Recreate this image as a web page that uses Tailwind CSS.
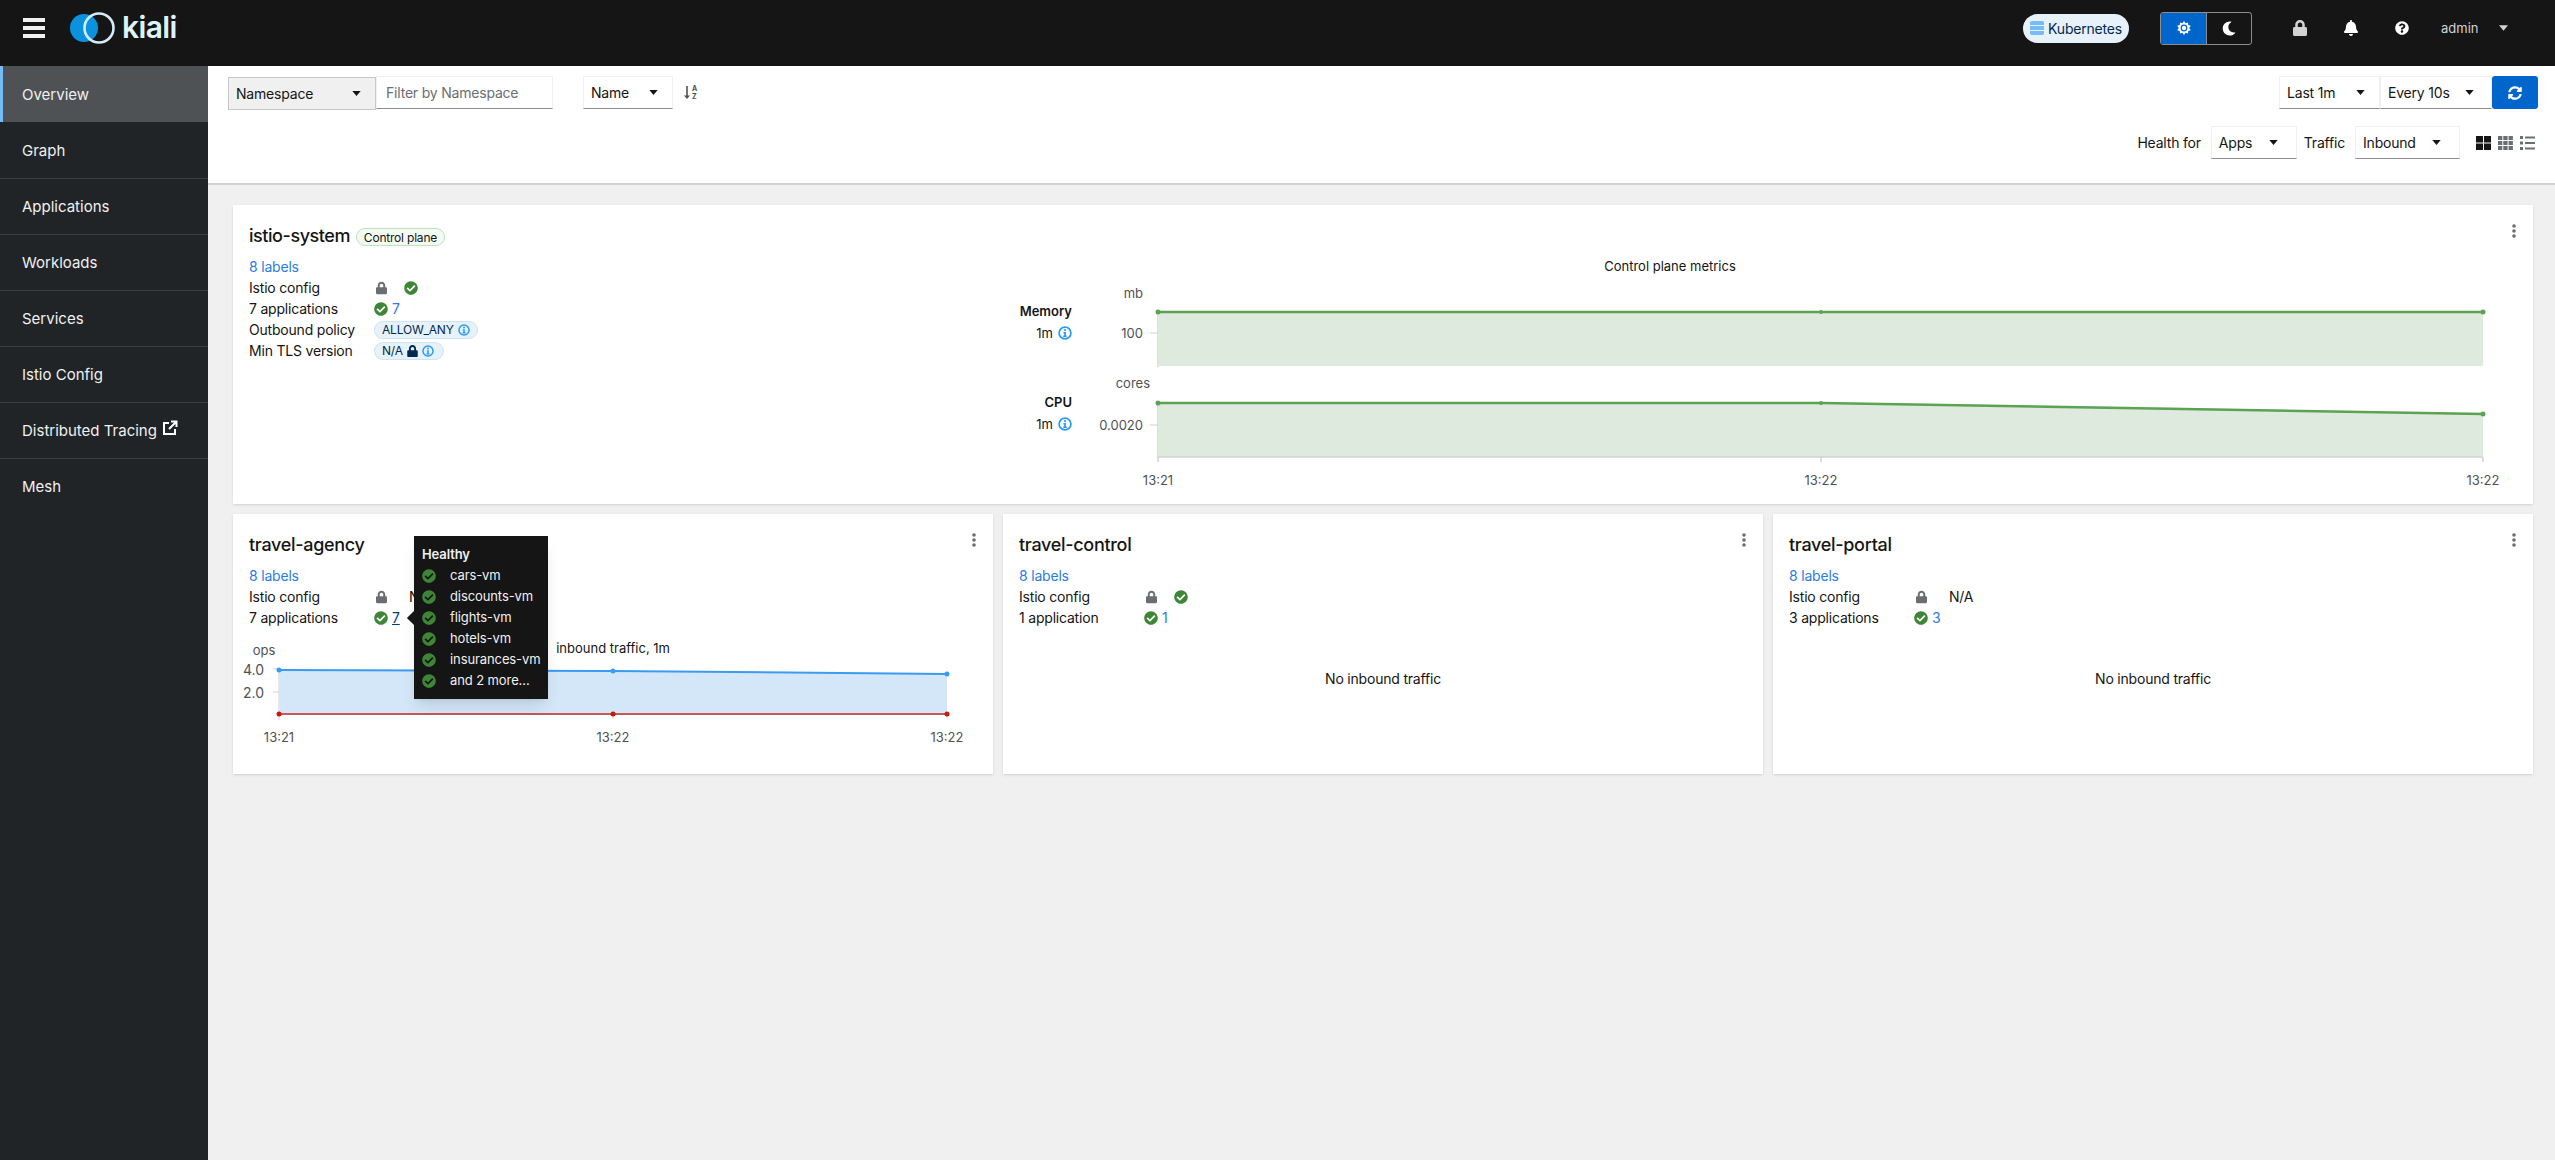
<!DOCTYPE html>
<html lang="en">
<head>
    <meta charset="UTF-8">
    <title>Kiali</title>
    <script src="https://cdn.jsdelivr.net/npm/@tailwindcss/browser@4"></script>
</head>
<body class="bg-[#f0f0f0] text-[#151515] font-[Inter,sans-serif] text-[14px] leading-[21px] tracking-[-0.2px]">
    <!-- shared icons -->
    <svg class="hidden">
        <symbol id="check" viewBox="0 0 512 512"><path d="M504 256c0 136.967-111.033 248-248 248S8 392.967 8 256 119.033 8 256 8s248 111.033 248 248zM227.314 387.314l184-184c6.248-6.248 6.248-16.379 0-22.627l-22.627-22.627c-6.248-6.249-16.379-6.249-22.628 0L216 308.118l-70.059-70.059c-6.248-6.248-16.379-6.248-22.628 0l-22.627 22.627c-6.248 6.248-6.248 16.379 0 22.627l104 104c6.249 6.25 16.379 6.25 22.628.001z"/></symbol>
        <symbol id="lock" viewBox="0 0 448 512"><path d="M400 224h-24v-72C376 68.2 307.8 0 224 0S72 68.2 72 152v72H48c-26.5 0-48 21.5-48 48v192c0 26.5 21.5 48 48 48h352c26.5 0 48-21.5 48-48V272c0-26.5-21.5-48-48-48zm-104 0H152v-72c0-39.7 32.3-72 72-72s72 32.3 72 72v72z"/></symbol>
        <symbol id="info" viewBox="0 0 512 512"><circle cx="256" cy="256" r="216" fill="none" stroke="currentColor" stroke-width="64"/><circle cx="256" cy="150" r="40"/><path d="M200 220h90v130h30v50H192v-50h34v-80h-26z"/></symbol>
        <symbol id="caret" viewBox="0 0 10 6"><path d="M0 0h10L5 6z"/></symbol>
        <symbol id="kebab" viewBox="0 0 4 14"><circle cx="2" cy="2" r="1.8"/><circle cx="2" cy="7" r="1.8"/><circle cx="2" cy="12" r="1.8"/></symbol>
    </svg>

    <div class="flex flex-col h-[1160px] overflow-hidden">
        <header class="h-[66px] shrink-0 bg-[#151515] flex items-center pb-[10px] text-white">
            <button class="ml-[23px] w-[22px] flex flex-col gap-[4px]">
                <span class="h-[4px] bg-[#f0f0f0]"></span>
                <span class="h-[4px] bg-[#f0f0f0]"></span>
                <span class="h-[4px] bg-[#f0f0f0]"></span>
            </button>
            <div class="ml-[25px] flex items-center">
                <svg width="45" height="32" viewBox="0 0 45 32">
                    <circle cx="14" cy="16" r="14" fill="#0a92de"/>
                    <circle cx="29" cy="16" r="14.500" fill="none" stroke="#d3ecf8" stroke-width="2.600"/>
                </svg>
                <span class="ml-[7px] text-[30px] font-semibold tracking-[-0.6px] text-[#def4fc] -mt-[2px]">kiali</span>
            </div>
            <div class="ml-auto flex items-center">
                <div class="h-[29px] w-[106px] rounded-full bg-[#e7f1fa] text-[#002952] flex items-center justify-center gap-[4px] text-[14px]">
                    <svg width="14" height="14" viewBox="0 0 14 14" fill="#73bcf7"><path d="M2 0h10a2 2 0 0 1 2 2v2H0V2a2 2 0 0 1 2-2z"/><rect y="5" width="14" height="4"/><path d="M0 10h14v2a2 2 0 0 1-2 2H2a2 2 0 0 1-2-2z"/></svg>
                    Kubernetes
                </div>
                <div class="ml-[31px] h-[33px] w-[92px] flex rounded-[3px] overflow-hidden border border-[#8a8d90]">
                    <div class="w-[45px] bg-[#06c] flex items-center justify-center">
                        <svg width="14" height="14" viewBox="0 0 14 14" fill="#fff"><path d="M7 0l1.500 2.200 2.500-.8.200 2.600 2.600.7L12.200 7l1.600 2.300-2.600.7-.2 2.600-2.500-.8L7 14l-1.500-2.200-2.500.8-.2-2.600L.2 9.300 1.800 7 .2 4.700l2.600-.7.200-2.600 2.500.8z"/><circle cx="7" cy="7" r="3.400" fill="#06c"/><circle cx="7" cy="7" r="2.200"/></svg>
                    </div>
                    <div class="flex-1 flex items-center justify-center border-l border-[#8a8d90]">
                        <svg width="14" height="15" viewBox="0 0 512 512" fill="#fff"><path d="M283.211 512c78.962 0 151.079-35.925 198.857-94.792 7.068-8.708-.639-21.43-11.562-19.35-124.203 23.654-238.262-71.576-238.262-196.954 0-72.222 38.662-138.635 101.498-174.394 9.686-5.512 7.25-20.197-3.756-22.23A258.156 258.156 0 0 0 283.211 0c-141.309 0-256 114.511-256 256 0 141.309 114.511 256 256 256z"/></svg>
                    </div>
                </div>
                <svg class="ml-[41px] fill-[#d2d2d2]" width="14" height="16"><use href="#lock"/></svg>
                <svg class="ml-[37px]" width="14" height="16" viewBox="0 0 448 512" fill="#fff"><path d="M224 512c35.32 0 63.97-28.65 63.97-64H160.03c0 35.35 28.65 64 63.97 64zm215.39-149.71c-19.32-20.76-55.47-51.99-55.47-154.29 0-77.7-54.48-139.9-127.94-155.16V32c0-17.67-14.32-32-31.98-32s-31.98 14.33-31.98 32v20.84C118.56 68.1 64.08 130.3 64.08 208c0 102.3-36.15 133.53-55.47 154.29-6 6.45-8.66 14.16-8.61 21.71.11 16.4 12.98 32 32.1 32h383.8c19.12 0 32-15.6 32.1-32 .05-7.55-2.61-15.27-8.61-21.71z"/></svg>
                <svg class="ml-[37px]" width="14" height="14" viewBox="0 0 512 512" fill="#fff"><path d="M504 256c0 136.997-111.043 248-248 248S8 392.997 8 256C8 119.083 119.043 8 256 8s248 111.083 248 248zM262.655 90c-54.497 0-89.255 22.957-116.549 63.758-3.536 5.286-2.353 12.415 2.715 16.258l34.699 26.31c5.205 3.947 12.621 3.008 16.665-2.122 17.864-22.658 30.113-35.797 57.303-35.797 20.429 0 45.698 13.148 45.698 32.958 0 14.976-12.363 22.667-32.534 33.976C247.128 238.528 216 254.941 216 296v4c0 6.627 5.373 12 12 12h56c6.627 0 12-5.373 12-12v-1.333c0-28.462 83.186-29.647 83.186-106.667 0-58.002-60.165-102-116.531-102zM256 338c-25.365 0-46 20.635-46 46 0 25.364 20.635 46 46 46s46-20.636 46-46c0-25.365-20.635-46-46-46z"/></svg>
                <span class="ml-[32px] w-[40px] text-[#d2d2d2] text-[13px] tracking-normal">admin</span>
                <svg class="ml-[18px] mr-[47px] fill-[#d2d2d2]" width="9" height="6"><use href="#caret"/></svg>
            </div>
        </header>

        <div class="flex flex-1 min-h-0">
            <nav class="w-[208px] shrink-0 bg-[#212427] text-[#f0f0f0] text-[15px] tracking-normal">
                <a class="h-[56px] flex items-center pl-[19px] bg-[#4f5255] border-l-[3px] border-[#73bcf7]">Overview</a>
                <a class="h-[56px] flex items-center pl-[22px]">Graph</a>
                <a class="h-[56px] flex items-center pl-[22px] border-t border-[#3c3f42]">Applications</a>
                <a class="h-[56px] flex items-center pl-[22px] border-t border-[#3c3f42]">Workloads</a>
                <a class="h-[56px] flex items-center pl-[22px] border-t border-[#3c3f42]">Services</a>
                <a class="h-[56px] flex items-center pl-[22px] border-t border-[#3c3f42]">Istio Config</a>
                <a class="h-[56px] flex items-center pl-[22px] border-t border-[#3c3f42]">Distributed Tracing
                    <svg class="ml-[5px] -mt-[6px]" width="16" height="16" viewBox="0 0 16 16" fill="none" stroke="#fff" stroke-width="2"><path d="M7 3H2v11h11V9"/><path d="M7 9l7-7M9 1.500h5.500V7"/></svg>
                </a>
                <a class="h-[56px] flex items-center pl-[22px] border-t border-[#3c3f42]">Mesh</a>
            </nav>

            <main class="flex-1 min-w-0">
                <div class="h-[119px] bg-white border-b-2 border-[#d2d2d2] pl-[20px] pr-[17px] pt-[10px]">
                    <div class="flex items-start h-[50px]">
                        <div class="w-[148px] h-[33px] mt-[1px] bg-[#f0f0f0] border border-[#c7c7c7] flex items-center justify-between pl-[7px] pr-[14px]">
                            Namespace
                            <svg class="fill-[#151515]" width="9" height="5"><use href="#caret"/></svg>
                        </div>
                        <div class="w-[177px] h-[33px] border border-[#f0f0f0] border-b-[#8a8d90] flex items-center pl-[9px] text-[#6a6e73]">Filter by Namespace</div>
                        <div class="ml-[30px] w-[90px] h-[33px] border border-[#f0f0f0] border-b-[#8a8d90] flex items-center justify-between pl-[7px] pr-[14px]">
                            Name
                            <svg class="fill-[#151515]" width="9" height="5"><use href="#caret"/></svg>
                        </div>
                        <svg class="ml-[11px] mt-[9px]" width="16" height="15" viewBox="0 0 16 15" fill="#4f5255" font-size="7" font-weight="700"><path d="M2.200 1h1.600v9.500H6l-3 3.500-3-3.500h2.200z"/><text x="8" y="6">A</text><text x="8" y="13.500">Z</text></svg>
                        <div class="ml-auto flex">
                            <div class="w-[101px] h-[33px] border border-[#f0f0f0] border-b-[#8a8d90] flex items-center justify-between pl-[7px] pr-[14px]">
                                Last 1m
                                <svg class="fill-[#151515]" width="9" height="5"><use href="#caret"/></svg>
                            </div>
                            <div class="w-[112px] h-[33px] border border-[#f0f0f0] border-b-[#8a8d90] flex items-center justify-between pl-[7px] pr-[17px]">
                                Every 10s
                                <svg class="fill-[#151515]" width="9" height="5"><use href="#caret"/></svg>
                            </div>
                            <button class="w-[46px] h-[33px] bg-[#06c] rounded-[3px] flex items-center justify-center">
                                <svg width="14" height="14" viewBox="0 0 512 512" fill="#fff"><path d="M370.72 133.28C339.458 104.008 298.888 87.962 255.848 88c-77.458.068-144.328 53.178-162.791 126.85-1.344 5.363-6.122 9.15-11.651 9.15H24.103c-7.498 0-13.194-6.807-11.807-14.176C33.933 94.924 134.813 8 256 8c66.448 0 126.791 26.136 171.315 68.685L463.03 40.97C478.149 25.851 504 36.559 504 57.941V192c0 13.255-10.745 24-24 24H345.941c-21.382 0-32.09-25.851-16.971-40.971l41.75-41.749zM32 296h134.059c21.382 0 32.09 25.851 16.971 40.971l-41.75 41.75c31.262 29.273 71.835 45.319 114.876 45.28 77.418-.07 144.315-53.144 162.787-126.849 1.344-5.363 6.122-9.15 11.651-9.15h57.304c7.498 0 13.194 6.807 11.807 14.176C478.067 417.076 377.187 504 256 504c-66.448 0-126.791-26.136-171.315-68.685L48.97 471.03C33.851 486.149 8 475.441 8 454.059V320c0-13.255 10.745-24 24-24z"/></svg>
                            </button>
                        </div>
                    </div>
                    <div class="flex items-center justify-end h-[33px] pr-[3px]">
                        <span>Health for</span>
                        <div class="ml-[10px] w-[86px] h-[33px] border border-[#f0f0f0] border-b-[#8a8d90] flex items-center justify-between pl-[7px] pr-[18px]">
                            Apps
                            <svg class="fill-[#151515]" width="9" height="5"><use href="#caret"/></svg>
                        </div>
                        <span class="ml-[7px]">Traffic</span>
                        <div class="ml-[10px] w-[105px] h-[33px] border border-[#f0f0f0] border-b-[#8a8d90] flex items-center justify-between pl-[7px] pr-[18px]">
                            Inbound
                            <svg class="fill-[#151515]" width="9" height="5"><use href="#caret"/></svg>
                        </div>
                        <svg class="ml-[16px]" width="15" height="14" viewBox="0 0 15 14" fill="#151515"><rect width="7" height="6.500"/><rect x="8" width="7" height="6.500"/><rect y="7.500" width="7" height="6.500"/><rect x="8" y="7.500" width="7" height="6.500"/></svg>
                        <svg class="ml-[7px]" width="15" height="14" viewBox="0 0 15 14" fill="#6a6e73"><rect width="4.300" height="4"/><rect x="5.300" width="4.300" height="4"/><rect x="10.600" width="4.300" height="4"/><rect y="5" width="4.300" height="4"/><rect x="5.300" y="5" width="4.300" height="4"/><rect x="10.600" y="5" width="4.300" height="4"/><rect y="10" width="4.300" height="4"/><rect x="5.300" y="10" width="4.300" height="4"/><rect x="10.600" y="10" width="4.300" height="4"/></svg>
                        <svg class="ml-[7px]" width="15" height="14" viewBox="0 0 15 14" fill="#6a6e73"><rect width="3" height="3"/><rect x="5" y=".500" width="10" height="2"/><rect y="5.500" width="3" height="3"/><rect x="5" y="6" width="10" height="2"/><rect y="11" width="3" height="3"/><rect x="5" y="11.500" width="10" height="2"/></svg>
                    </div>
                </div>

                <div class="pl-[25px] pr-[22px] pt-[20px] flex flex-col gap-[10px]">
                    <!-- control plane card -->
                    <section class="relative h-[299px] bg-white shadow-sm flex">
                        <div class="flex-1 pl-[16px] pt-[17px]">
                            <div class="h-[27px] flex items-center mb-[7px]">
                                <h2 class="text-[18px] font-medium tracking-[-0.45px]">istio-system</h2>
                                <span class="ml-[6px] mt-[3px] h-[18px] w-[89px] justify-center flex items-center rounded-full bg-[#f3faf2] border border-[#bde5b8] text-[12px]">Control plane</span>
                            </div>
                            <a class="block text-[#2b7de0]">8 labels</a>
                            <div class="flex items-center h-[21px]">
                                <span class="w-[125px]">Istio config</span>
                                <svg class="ml-[2px] fill-[#6a6e73]" width="11" height="14"><use href="#lock"/></svg>
                                <svg class="ml-[17px] fill-[#3e8635]" width="14" height="14"><use href="#check"/></svg>
                            </div>
                            <div class="flex items-center h-[21px]">
                                <span class="w-[125px]">7 applications</span>
                                <svg class="fill-[#3e8635]" width="14" height="14"><use href="#check"/></svg>
                                <a class="ml-[4px] text-[#2b7de0]">7</a>
                            </div>
                            <div class="flex items-center h-[21px]">
                                <span class="w-[125px]">Outbound policy</span>
                                <span class="h-[18px] w-[104px] rounded-full bg-[#e7f1fa] border border-[#cde3f6] text-[#002952] text-[12px] flex items-center pl-[7px] gap-[4px]">ALLOW_ANY <svg class="fill-[#2b9af3] text-[#2b9af3]" width="12" height="12"><use href="#info"/></svg></span>
                            </div>
                            <div class="flex items-center h-[21px]">
                                <span class="w-[125px]">Min TLS version</span>
                                <span class="h-[18px] w-[70px] rounded-full bg-[#e7f1fa] border border-[#cde3f6] text-[#002952] text-[12px] flex items-center pl-[7px] gap-[4px]">N/A <svg class="fill-[#002952]" width="11" height="12"><use href="#lock"/></svg><svg class="fill-[#2b9af3] text-[#2b9af3]" width="12" height="12"><use href="#info"/></svg></span>
                            </div>
                        </div>
                        <svg class="self-end shrink-0 tracking-normal" width="1533" height="254" viewBox="1000 250 1533 254" font-size="13" fill="#151515">
                            <text x="1670" y="271" text-anchor="middle">Control plane metrics</text>

                            <text x="1072" y="316" text-anchor="end" font-weight="600">Memory</text>
                            <text x="1053" y="338" text-anchor="end">1m</text>
                            <use href="#info" x="1058" y="326" width="14" height="14" fill="#2b9af3" color="#2b9af3"/>
                            <text x="1143" y="298" text-anchor="end" fill="#4f5255">mb</text>
                            <text x="1143" y="338" text-anchor="end" fill="#4f5255">100</text>
                            <path d="M1150 333h8" stroke="#e0e0e0" stroke-width="1.500"/>
                            <path d="M1158 312V367" stroke="#d2d2d2" stroke-width="1.500"/>
                            <path d="M1158 312H2483V366H1158z" fill="#dfeadf"/>
                            <path d="M1158 312H2483" stroke="#5ba352" stroke-width="2.500"/>
                            <circle cx="1158" cy="312" r="2.500" fill="#5ba352"/><circle cx="1821" cy="312" r="2" fill="#5ba352"/><circle cx="2483" cy="312" r="2.500" fill="#5ba352"/>

                            <text x="1072" y="407" text-anchor="end" font-weight="600">CPU</text>
                            <text x="1053" y="429" text-anchor="end">1m</text>
                            <use href="#info" x="1058" y="417" width="14" height="14" fill="#2b9af3" color="#2b9af3"/>
                            <text x="1150" y="388" text-anchor="end" fill="#4f5255">cores</text>
                            <text x="1143" y="430" text-anchor="end" fill="#4f5255">0.0020</text>
                            <path d="M1150 425h8" stroke="#e0e0e0" stroke-width="1.500"/>
                            <path d="M1158 403V462M2483 457v5M1821 457v5" stroke="#d2d2d2" stroke-width="1.500"/>
                            <path d="M1158 403L1821 403C2000 404 2200 408 2483 414V457H1158z" fill="#dfeadf"/>
                            <path d="M1158 403L1821 403C2000 404 2200 408 2483 414" fill="none" stroke="#5ba352" stroke-width="2.500"/>
                            <path d="M1158 457H2483" stroke="#d2d2d2" stroke-width="1.500"/>
                            <circle cx="1158" cy="403" r="2.500" fill="#5ba352"/><circle cx="1821" cy="403" r="2" fill="#5ba352"/><circle cx="2483" cy="414" r="2.500" fill="#5ba352"/>

                            <text x="1158" y="485" text-anchor="middle" fill="#4f5255">13:21</text>
                            <text x="1821" y="485" text-anchor="middle" fill="#4f5255">13:22</text>
                            <text x="2483" y="485" text-anchor="middle" fill="#4f5255">13:22</text>
                        </svg>
                        <svg class="absolute left-[2279px] top-[19px] fill-[#6a6e73]" width="4" height="14"><use href="#kebab"/></svg>
                    </section>

                    <div class="grid grid-cols-3 gap-[10px] h-[260px]">
                        <!-- travel-agency -->
                        <section class="relative bg-white shadow-sm flex flex-col">
                            <div class="pl-[16px] pt-[17px]">
                                <h2 class="h-[27px] mb-[7px] text-[18px] leading-[27px] font-medium tracking-[-0.3px]">travel-agency</h2>
                                <a class="block text-[#2b7de0]">8 labels</a>
                                <div class="flex items-center h-[21px]">
                                    <span class="w-[125px]">Istio config</span>
                                    <svg class="ml-[2px] fill-[#6a6e73]" width="11" height="14"><use href="#lock"/></svg>
                                    <span class="ml-[22px]">N/A</span>
                                </div>
                                <div class="flex items-center h-[21px]">
                                    <span class="w-[125px]">7 applications</span>
                                    <svg class="fill-[#3e8635]" width="14" height="14"><use href="#check"/></svg>
                                    <a class="ml-[4px] text-[#004080] underline">7</a>
                                </div>
                            </div>
                            <svg class="mt-auto tracking-normal" width="760" height="134" viewBox="233 640 760 134" font-size="13" fill="#4f5255">
                                <text x="670" y="653" text-anchor="end" fill="#151515">inbound traffic, 1m</text>
                                <text x="264" y="655" text-anchor="middle">ops</text>
                                <text x="264" y="675" text-anchor="end" font-size="14">4.0</text>
                                <text x="264" y="698" text-anchor="end" font-size="14">2.0</text>
                                <path d="M273 669h6M273 692h6" stroke="#e0e0e0" stroke-width="1.500"/>
                                <path d="M279 670V720M613 714v5M947 714v5" stroke="#d2d2d2" stroke-width="1"/>
                                <path d="M279 670L613 671L947 674V714H279z" fill="#d3e7f9"/>
                                <path d="M279 670L613 671L947 674" fill="none" stroke="#3a9bf0" stroke-width="2"/>
                                <path d="M279 714H947" stroke="#c9575a" stroke-width="2"/>
                                <circle cx="279" cy="670" r="2.500" fill="#3a9bf0"/><circle cx="613" cy="671" r="2.500" fill="#3a9bf0"/><circle cx="947" cy="674" r="2.500" fill="#3a9bf0"/>
                                <circle cx="279" cy="714" r="2.500" fill="#c9190b"/><circle cx="613" cy="714" r="2.500" fill="#c9190b"/><circle cx="947" cy="714" r="2.500" fill="#c9190b"/>
                                <text x="279" y="742" text-anchor="middle">13:21</text>
                                <text x="613" y="742" text-anchor="middle">13:22</text>
                                <text x="947" y="742" text-anchor="middle">13:22</text>
                            </svg>
                            <svg class="absolute right-[17px] top-[19px] fill-[#6a6e73]" width="4" height="14"><use href="#kebab"/></svg>

                            <!-- tooltip -->
                            <div class="absolute left-[181px] top-[22px] w-[134px] h-[163px] bg-[#151515] text-[#f0f0f0] px-[8px] pt-[8px] shadow-lg whitespace-nowrap text-[13px] tracking-[-0.1px]">
                                <span class="absolute -left-[5px] top-[77px] w-[10px] h-[10px] rotate-45 bg-[#151515]"></span>
                                <div class="font-semibold">Healthy</div>
                                <div class="flex items-center h-[21px] gap-[14px]"><svg class="fill-[#3e8635] shrink-0" width="14" height="14"><use href="#check"/></svg>cars-vm</div>
                                <div class="flex items-center h-[21px] gap-[14px]"><svg class="fill-[#3e8635] shrink-0" width="14" height="14"><use href="#check"/></svg>discounts-vm</div>
                                <div class="flex items-center h-[21px] gap-[14px]"><svg class="fill-[#3e8635] shrink-0" width="14" height="14"><use href="#check"/></svg>flights-vm</div>
                                <div class="flex items-center h-[21px] gap-[14px]"><svg class="fill-[#3e8635] shrink-0" width="14" height="14"><use href="#check"/></svg>hotels-vm</div>
                                <div class="flex items-center h-[21px] gap-[14px]"><svg class="fill-[#3e8635] shrink-0" width="14" height="14"><use href="#check"/></svg>insurances-vm</div>
                                <div class="flex items-center h-[21px] gap-[14px]"><svg class="fill-[#3e8635] shrink-0" width="14" height="14"><use href="#check"/></svg>and 2 more...</div>
                            </div>
                        </section>

                        <!-- travel-control -->
                        <section class="relative bg-white shadow-sm pl-[16px] pt-[17px]">
                            <h2 class="h-[27px] mb-[7px] text-[18px] leading-[27px] font-medium tracking-[-0.3px]">travel-control</h2>
                            <a class="block text-[#2b7de0]">8 labels</a>
                            <div class="flex items-center h-[21px]">
                                <span class="w-[125px]">Istio config</span>
                                <svg class="ml-[2px] fill-[#6a6e73]" width="11" height="14"><use href="#lock"/></svg>
                                <svg class="ml-[17px] fill-[#3e8635]" width="14" height="14"><use href="#check"/></svg>
                            </div>
                            <div class="flex items-center h-[21px]">
                                <span class="w-[125px]">1 application</span>
                                <svg class="fill-[#3e8635]" width="14" height="14"><use href="#check"/></svg>
                                <a class="ml-[4px] text-[#2b7de0]">1</a>
                            </div>
                            <p class="mt-[40px] pr-[16px] text-center">No inbound traffic</p>
                            <svg class="absolute right-[17px] top-[19px] fill-[#6a6e73]" width="4" height="14"><use href="#kebab"/></svg>
                        </section>

                        <!-- travel-portal -->
                        <section class="relative bg-white shadow-sm pl-[16px] pt-[17px]">
                            <h2 class="h-[27px] mb-[7px] text-[18px] leading-[27px] font-medium tracking-[-0.3px]">travel-portal</h2>
                            <a class="block text-[#2b7de0]">8 labels</a>
                            <div class="flex items-center h-[21px]">
                                <span class="w-[125px]">Istio config</span>
                                <svg class="ml-[2px] fill-[#6a6e73]" width="11" height="14"><use href="#lock"/></svg>
                                <span class="ml-[22px]">N/A</span>
                            </div>
                            <div class="flex items-center h-[21px]">
                                <span class="w-[125px]">3 applications</span>
                                <svg class="fill-[#3e8635]" width="14" height="14"><use href="#check"/></svg>
                                <a class="ml-[4px] text-[#2b7de0]">3</a>
                            </div>
                            <p class="mt-[40px] pr-[16px] text-center">No inbound traffic</p>
                            <svg class="absolute right-[17px] top-[19px] fill-[#6a6e73]" width="4" height="14"><use href="#kebab"/></svg>
                        </section>
                    </div>
                </div>
            </main>
        </div>
    </div>
</body>
</html>
